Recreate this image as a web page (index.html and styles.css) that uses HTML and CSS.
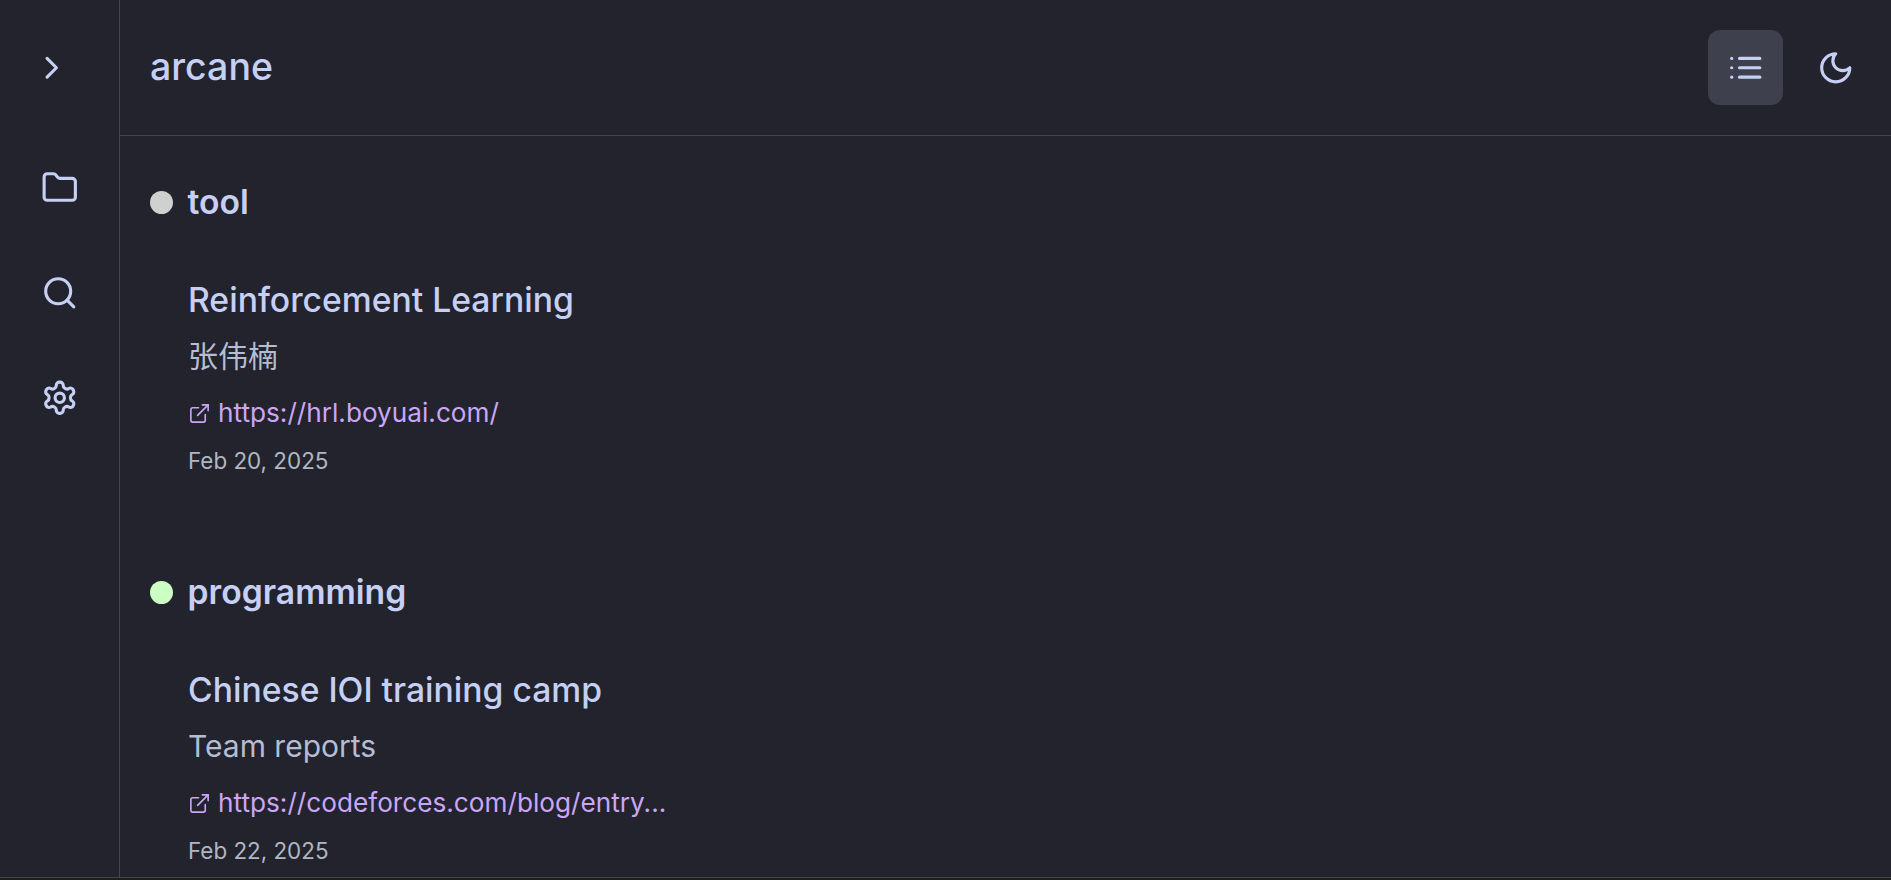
FILE: index.html
```html
<!DOCTYPE html>
<html lang="en">
<head>
    <meta charset="UTF-8">
    <title>arcane</title>
    <link rel="stylesheet" href="styles.css">
</head>
<body>
    <div class="app">
        <!-- Left rail -->
        <nav class="rail">
            <button class="rail-btn rail-toggle">
                <svg class="icon" viewBox="0 0 24 24"><path d="m9 18 6-6-6-6"/></svg>
            </button>
            <div class="rail-group">
                <button class="rail-btn">
                    <svg class="icon" viewBox="0 0 24 24"><path d="M20 20a2 2 0 0 0 2-2V8a2 2 0 0 0-2-2h-7.9a2 2 0 0 1-1.69-.9L9.6 3.9A2 2 0 0 0 7.93 3H4a2 2 0 0 0-2 2v13a2 2 0 0 0 2 2Z"/></svg>
                </button>
                <button class="rail-btn">
                    <svg class="icon" viewBox="0 0 24 24"><circle cx="11" cy="11" r="8"/><path d="m21 21-4.3-4.3"/></svg>
                </button>
                <button class="rail-btn">
                    <svg class="icon" viewBox="0 0 24 24"><path d="M12.22 2h-.44a2 2 0 0 0-2 2v.18a2 2 0 0 1-1 1.73l-.43.25a2 2 0 0 1-2 0l-.15-.08a2 2 0 0 0-2.73.73l-.22.38a2 2 0 0 0 .73 2.73l.15.1a2 2 0 0 1 1 1.72v.51a2 2 0 0 1-1 1.74l-.15.09a2 2 0 0 0-.73 2.73l.22.38a2 2 0 0 0 2.73.73l.15-.08a2 2 0 0 1 2 0l.43.25a2 2 0 0 1 1 1.73V20a2 2 0 0 0 2 2h.44a2 2 0 0 0 2-2v-.18a2 2 0 0 1 1-1.73l.43-.25a2 2 0 0 1 2 0l.15.08a2 2 0 0 0 2.73-.73l.22-.39a2 2 0 0 0-.73-2.73l-.15-.08a2 2 0 0 1-1-1.74v-.5a2 2 0 0 1 1-1.74l.15-.09a2 2 0 0 0 .73-2.73l-.22-.38a2 2 0 0 0-2.73-.73l-.15.08a2 2 0 0 1-2 0l-.43-.25a2 2 0 0 1-1-1.73V4a2 2 0 0 0-2-2z"/><circle cx="12" cy="12" r="3"/></svg>
                </button>
            </div>
        </nav>

        <div class="main">
            <header class="topbar">
                <h1 class="title">arcane</h1>
                <div class="actions">
                    <button class="action action-active">
                        <svg class="icon" viewBox="0 0 24 24"><path d="M8 6h13"/><path d="M8 12h13"/><path d="M8 18h13"/><path d="M3 6h.01"/><path d="M3 12h.01"/><path d="M3 18h.01"/></svg>
                    </button>
                    <button class="action">
                        <svg class="icon" viewBox="0 0 24 24"><path d="M12 3a6 6 0 0 0 9 9 9 9 0 1 1-9-9Z"/></svg>
                    </button>
                </div>
            </header>

            <main class="content">
                <section class="tag-group">
                    <h2 class="tag"><span class="dot dot-grey"></span>tool</h2>
                    <article class="entry">
                        <h3 class="entry-title">Reinforcement Learning</h3>
                        <p class="entry-desc">张伟楠</p>
                        <a class="entry-link" href="#">
                            <svg class="link-icon" viewBox="0 0 24 24"><path d="M15 3h6v6"/><path d="M10 14 21 3"/><path d="M18 13v6a2 2 0 0 1-2 2H5a2 2 0 0 1-2-2V8a2 2 0 0 1 2-2h6"/></svg>
                            https://hrl.boyuai.com/
                        </a>
                        <p class="entry-date">Feb 20, 2025</p>
                    </article>
                </section>

                <section class="tag-group">
                    <h2 class="tag"><span class="dot dot-green"></span>programming</h2>
                    <article class="entry">
                        <h3 class="entry-title">Chinese IOI training camp</h3>
                        <p class="entry-desc">Team reports</p>
                        <a class="entry-link" href="#">
                            <svg class="link-icon" viewBox="0 0 24 24"><path d="M15 3h6v6"/><path d="M10 14 21 3"/><path d="M18 13v6a2 2 0 0 1-2 2H5a2 2 0 0 1-2-2V8a2 2 0 0 1 2-2h6"/></svg>
                            https://codeforces.com/blog/entry...
                        </a>
                        <p class="entry-date">Feb 22, 2025</p>
                    </article>
                </section>
            </main>
        </div>
    </div>
    <div class="bottom-strip"></div>
</body>
</html>
```

FILE: styles.css
```css
* {
    box-sizing: border-box;
}

html, body {
    height: 100%;
}

body {
    margin: 0;
    overflow: hidden;
    background-color: #22232d;
    color: #c6d0f5;
    font-family: Inter, "Noto Sans CJK SC", sans-serif;
}

svg {
    display: block;
    fill: none;
    stroke: currentColor;
    stroke-width: 2;
    stroke-linecap: round;
    stroke-linejoin: round;
}

.icon {
    width: 37.5px;
    height: 37.5px;
}

.link-icon {
    width: 23px;
    height: 23px;
    margin-left: -0.5px;
    stroke-width: 1.7;
}

button {
    padding: 0;
    border: none;
    background: none;
    color: inherit;
}

.app {
    display: flex;
    height: 877px;
    overflow: hidden;
}

.bottom-strip {
    height: 3px;
    border-top: 1px solid #45463f;
    background-color: #1d1d19;
}

/* Left rail */
.rail {
    flex: 0 0 120px;
    display: flex;
    flex-direction: column;
    align-items: center;
    border-right: 1px solid #414452;
}

.rail-toggle {
    margin-top: 49px;
    margin-left: -16px;
}

.rail-group {
    display: flex;
    flex-direction: column;
    gap: 67.5px;
    margin-top: 82.5px;
}

/* Top bar */
.main {
    flex: 1;
    min-width: 0;
}

.topbar {
    display: flex;
    align-items: center;
    justify-content: space-between;
    height: 136px;
    padding: 0 18px 0 30px;
    border-bottom: 1px solid #414452;
}

.title {
    margin: 0 0 2px;
    font-size: 37.5px;
    font-weight: 500;
}

.actions {
    display: flex;
    gap: 15px;
}

.action {
    display: flex;
    align-items: center;
    justify-content: center;
    width: 75px;
    height: 75px;
    border-radius: 12px;
}

.action-active {
    background-color: #3f404d;
}

/* Tag groups */
.content {
    padding: 42px 30px 0;
}

.tag-group {
    margin-bottom: 91px;
}

.tag {
    display: flex;
    align-items: center;
    gap: 14.5px;
    margin: 0;
    font-size: 33.7px;
    font-weight: 600;
    line-height: 48px;
}

.dot {
    width: 23px;
    height: 23px;
    border-radius: 50%;
}

.dot-grey {
    background-color: #d0d0d0;
}

.dot-green {
    background-color: #ccffc4;
}

.entry {
    margin-top: 50px;
    padding-left: 38px;
}

.entry-title {
    margin: 0;
    font-size: 33.7px;
    font-weight: 500;
    line-height: 48px;
}

.entry-desc {
    margin: 10px 0 0;
    color: #b6bdd2;
    font-size: 30px;
    line-height: 44px;
}

.entry-link {
    display: flex;
    align-items: center;
    gap: 7.5px;
    margin-top: 15px;
    color: #cba6f7;
    font-size: 26.2px;
    line-height: 40px;
    text-decoration: none;
}

.entry-date {
    margin: 12px 0 0;
    color: #b0b7c3;
    font-size: 22.4px;
    line-height: 32px;
}
```
